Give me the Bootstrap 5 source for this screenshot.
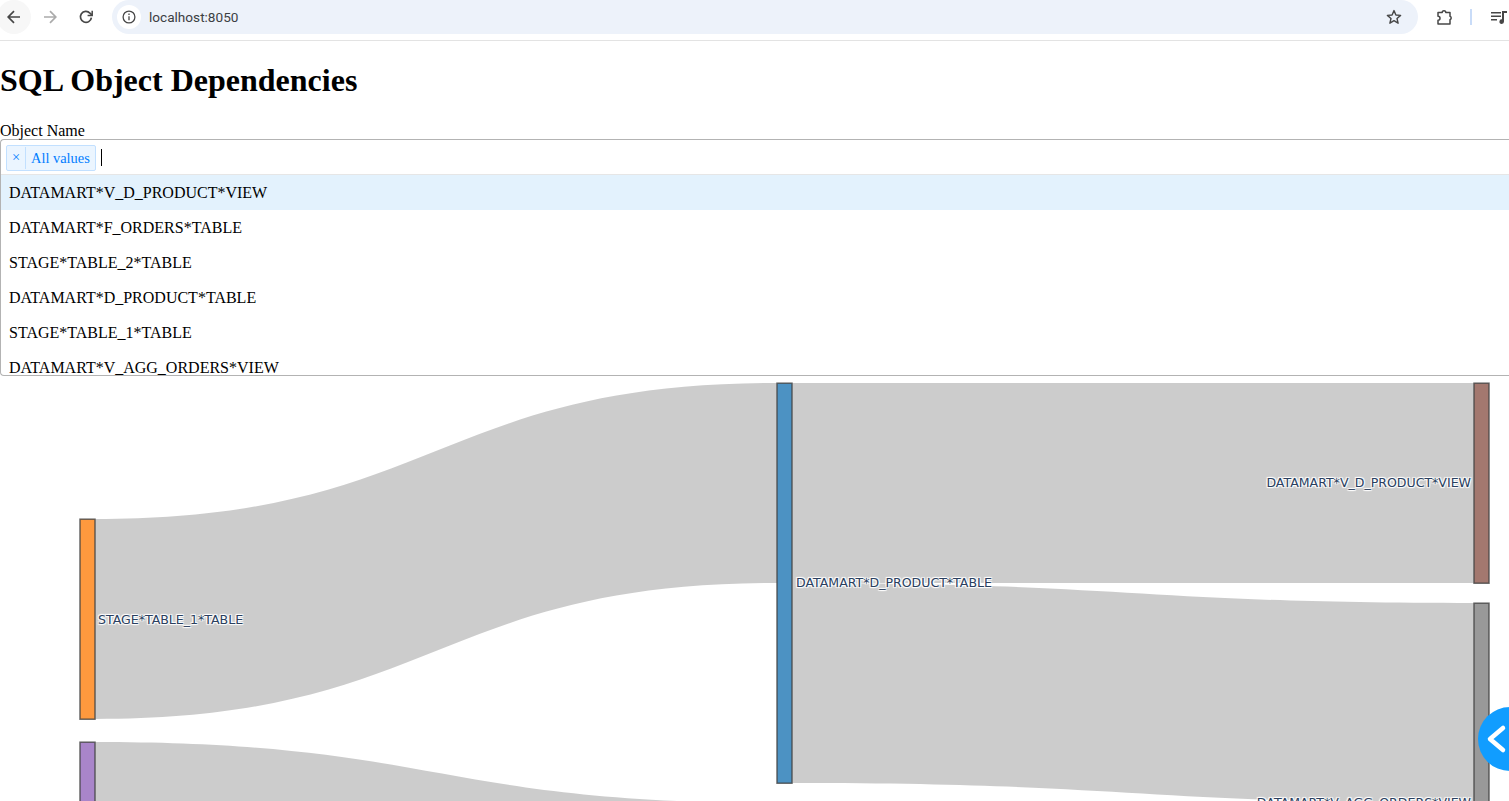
<!DOCTYPE html>
<html lang="en">
<head>
  <meta charset="UTF-8"/>
  <meta name="viewport" content="width=device-width, initial-scale=1.0"/>
  <title>SQL Object Dependencies</title>
  <link rel="stylesheet" href="https://cdn.jsdelivr.net/npm/bootstrap@5.3.0/dist/css/bootstrap.min.css"/>
  <style>
    html, body { height: 801px; overflow: hidden; }
    body { font-family: "Liberation Serif", "Times New Roman", serif; font-size: 16px; color: #000; background: #fff; }
    /* browser chrome */
    .chrome-bar { height: 41px; border-bottom: 1px solid #e3e3e3; padding-bottom: 6px; font-family: Roboto, "Liberation Sans", sans-serif; }
    .chrome-btn { width: 34px; height: 34px; flex: none; border-radius: 50%; margin-right: 2px; }
    .chrome-btn:first-child { margin-left: -3px; }
    .chrome-btn.hovered { background: #f7f7f7; }
    .addr-pill { width: 1306px; height: 34px; margin-left: 7px; background: #edf2fa; border-radius: 17px; padding: 0 8px 0 5px; }
    .addr-info { width: 24px; height: 24px; border-radius: 50%; background: #fff; }
    .addr-text { margin-left: 8px; font-size: 13.6px; color: #3c4043; }
    .ext-btn { margin-left: 18px; }
    .ext-sep { width: 1.5px; height: 16px; background: #c9dcf8; margin: 0 19px 0 16px; }
    /* page */
    .page-title { font-size: 32px; font-weight: 700; line-height: 37px; margin: 21px 0 22px; }
    .field-label { line-height: 20px; height: 18px; margin: 0; }
    .picker { height: 237px; border: 1px solid #b3b3b3; border-right: 0; border-radius: 4px 0 0 4px; overflow: hidden; }
    .picker-top { height: 35px; padding: 5px 0 0 5px; border-bottom: 1px solid #e6e6e6; }
    .picker-tag { height: 26px; border: 1px solid #c2e0ff; border-radius: 2px; background: #ebf5ff; color: #007eff; font-size: 14.4px; }
    .tag-x { width: 19px; border-right: 1px solid #c2e0ff; }
    .tag-val { padding: 2px 5px 0; }
    .picker-caret { width: 1px; height: 17px; background: #000; margin: 0 0 5px 5px; }
    .picker-opt { height: 35px; line-height: 35px; padding-left: 8px; }
    .picker-opt.active-opt { background: #e3f2fd; }
    .sankey-plot { display: block; }
    .sankey-plot text { font-family: "DejaVu Sans", Verdana, sans-serif; font-size: 12.55px; fill: #2a3f5f; text-shadow: 1px 1px 1px #fff, -1px -1px 1px #fff, 1px -1px 1px #fff, -1px 1px 1px #fff; }
    .sankey-link { fill: #000; fill-opacity: .2; }
    .sankey-node { stroke: #444; stroke-opacity: .8; stroke-width: 1.5; }
    .side-toggle { position: fixed; left: 1478px; top: 707px; width: 64px; height: 64px; border-radius: 50%; background: #119dff; border: 0; padding: 0; }
  </style>
</head>
<body>
  <!-- Browser toolbar -->
  <div class="chrome-bar d-flex align-items-center">
    <div class="chrome-btn hovered d-flex align-items-center justify-content-center">
      <svg width="16" height="16" viewBox="0 0 16 16" fill="none" stroke="#474747" stroke-width="1.7"><path d="M14 8H2.5M8 2.2 2.2 8 8 13.8"/></svg>
    </div>
    <div class="chrome-btn d-flex align-items-center justify-content-center">
      <svg width="16" height="16" viewBox="0 0 16 16" fill="none" stroke="#ababab" stroke-width="1.7"><path d="M2 8h11.5M8 2.2 13.8 8 8 13.8"/></svg>
    </div>
    <div class="chrome-btn d-flex align-items-center justify-content-center">
      <svg width="16" height="16" viewBox="0 0 16 16" fill="none" stroke="#474747" stroke-width="1.7"><path d="M13.4 8.6A5.5 5.5 0 1 1 12 4.2L14 6.2"/><path d="M14.2 1.8v4.8H9.6" stroke-width="1.5"/></svg>
    </div>
    <div class="addr-pill d-flex align-items-center">
      <div class="addr-info d-flex align-items-center justify-content-center">
        <svg width="14" height="14" viewBox="0 0 14 14" fill="none" stroke="#474747" stroke-width="1.3"><circle cx="7" cy="7" r="5.9"/><path d="M7 6.2v4M7 3.6v1.4"/></svg>
      </div>
      <span class="addr-text">localhost:8050</span>
      <svg class="ms-auto me-2" width="16" height="16" viewBox="0 0 16 16" fill="none" stroke="#474747" stroke-width="1.4" stroke-linejoin="round"><path d="M8 1.6 9.9 6l4.7.4-3.6 3.1 1.1 4.7L8 11.7l-4.1 2.5L5 9.500 1.400 6.400 6.100 6Z"/></svg>
    </div>
    <div class="ext-btn d-flex">
      <svg width="18" height="18" viewBox="0 0 18 18" fill="none" stroke="#474747" stroke-width="1.5" stroke-linejoin="round"><path d="M2 4.500h4.200a1.800 1.800 0 0 1 3.600 0H14v3.800a1.800 1.800 0 0 1 0 3.400V16H2v-3.800a2 2 0 0 0 0-4Z"/></svg>
    </div>
    <div class="ext-sep"></div>
    <svg width="16" height="14" viewBox="0 0 16 14" fill="#474747"><path d="M0 2h10v1.500H0zM0 5.500h10V7H0zM0 9h6v1.500H0z"/><path d="M11 1h5v2h-3v8.500a2.300 2.300 0 1 1-2-2.200Z"/></svg>
  </div>

  <!-- Page -->
  <h1 class="page-title">SQL Object Dependencies</h1>
  <label class="field-label d-block">Object Name</label>
  <div class="picker">
    <div class="picker-top d-flex align-items-start">
      <div class="picker-tag d-flex align-items-center">
        <span class="tag-x text-center">×</span>
        <span class="tag-val">All values</span>
      </div>
      <div class="picker-caret align-self-center"></div>
    </div>
    <div class="picker-opt active-opt">DATAMART*V_D_PRODUCT*VIEW</div>
    <div class="picker-opt">DATAMART*F_ORDERS*TABLE</div>
    <div class="picker-opt">STAGE*TABLE_2*TABLE</div>
    <div class="picker-opt">DATAMART*D_PRODUCT*TABLE</div>
    <div class="picker-opt">STAGE*TABLE_1*TABLE</div>
    <div class="picker-opt">DATAMART*V_AGG_ORDERS*VIEW</div>
  </div>

  <!-- Sankey plot, viewBox uses page coordinates -->
  <svg class="sankey-plot" width="1509" height="425" viewBox="0 376 1509 425">
    <path class="sankey-link" d="M95 519C436 519 436 383 777 383V583C436 583 436 719 95 719Z"/>
    <path class="sankey-link" d="M95 742C436 742 436 803 777 803V1003C436 1003 436 942 95 942Z"/>
    <path class="sankey-link" d="M792 383H1474V583H792Z"/>
    <path class="sankey-link" d="M792 583C1133 583 1133 603 1474 603V803C1133 803 1133 783 792 783Z"/>
    <rect class="sankey-node" x="80" y="519.200" width="15" height="200" fill="#ff993e"/>
    <rect class="sankey-node" x="80" y="742.200" width="15" height="200" fill="#a985ca"/>
    <rect class="sankey-node" x="777" y="383.200" width="15" height="400" fill="#4c92c3"/>
    <rect class="sankey-node" x="1474" y="383.200" width="15" height="200" fill="#a3786f"/>
    <rect class="sankey-node" x="1474" y="603.200" width="15" height="200" fill="#999999"/>
    <text x="98" y="624">STAGE*TABLE_1*TABLE</text>
    <text x="796" y="587">DATAMART*D_PRODUCT*TABLE</text>
    <text x="1471" y="487" text-anchor="end">DATAMART*V_D_PRODUCT*VIEW</text>
    <text x="1471" y="807" text-anchor="end">DATAMART*V_AGG_ORDERS*VIEW</text>
  </svg>

  <button class="side-toggle" type="button" aria-label="Toggle panel">
    <svg class="d-block" width="64" height="64" viewBox="0 0 64 64" fill="none" stroke="#fff" stroke-width="4.500" stroke-linecap="round" stroke-linejoin="round"><path d="M25 21 12 32 25 43" /></svg>
  </button>

  <script src="https://cdn.jsdelivr.net/npm/bootstrap@5.3.0/dist/js/bootstrap.bundle.min.js"></script>
</body>
</html>
